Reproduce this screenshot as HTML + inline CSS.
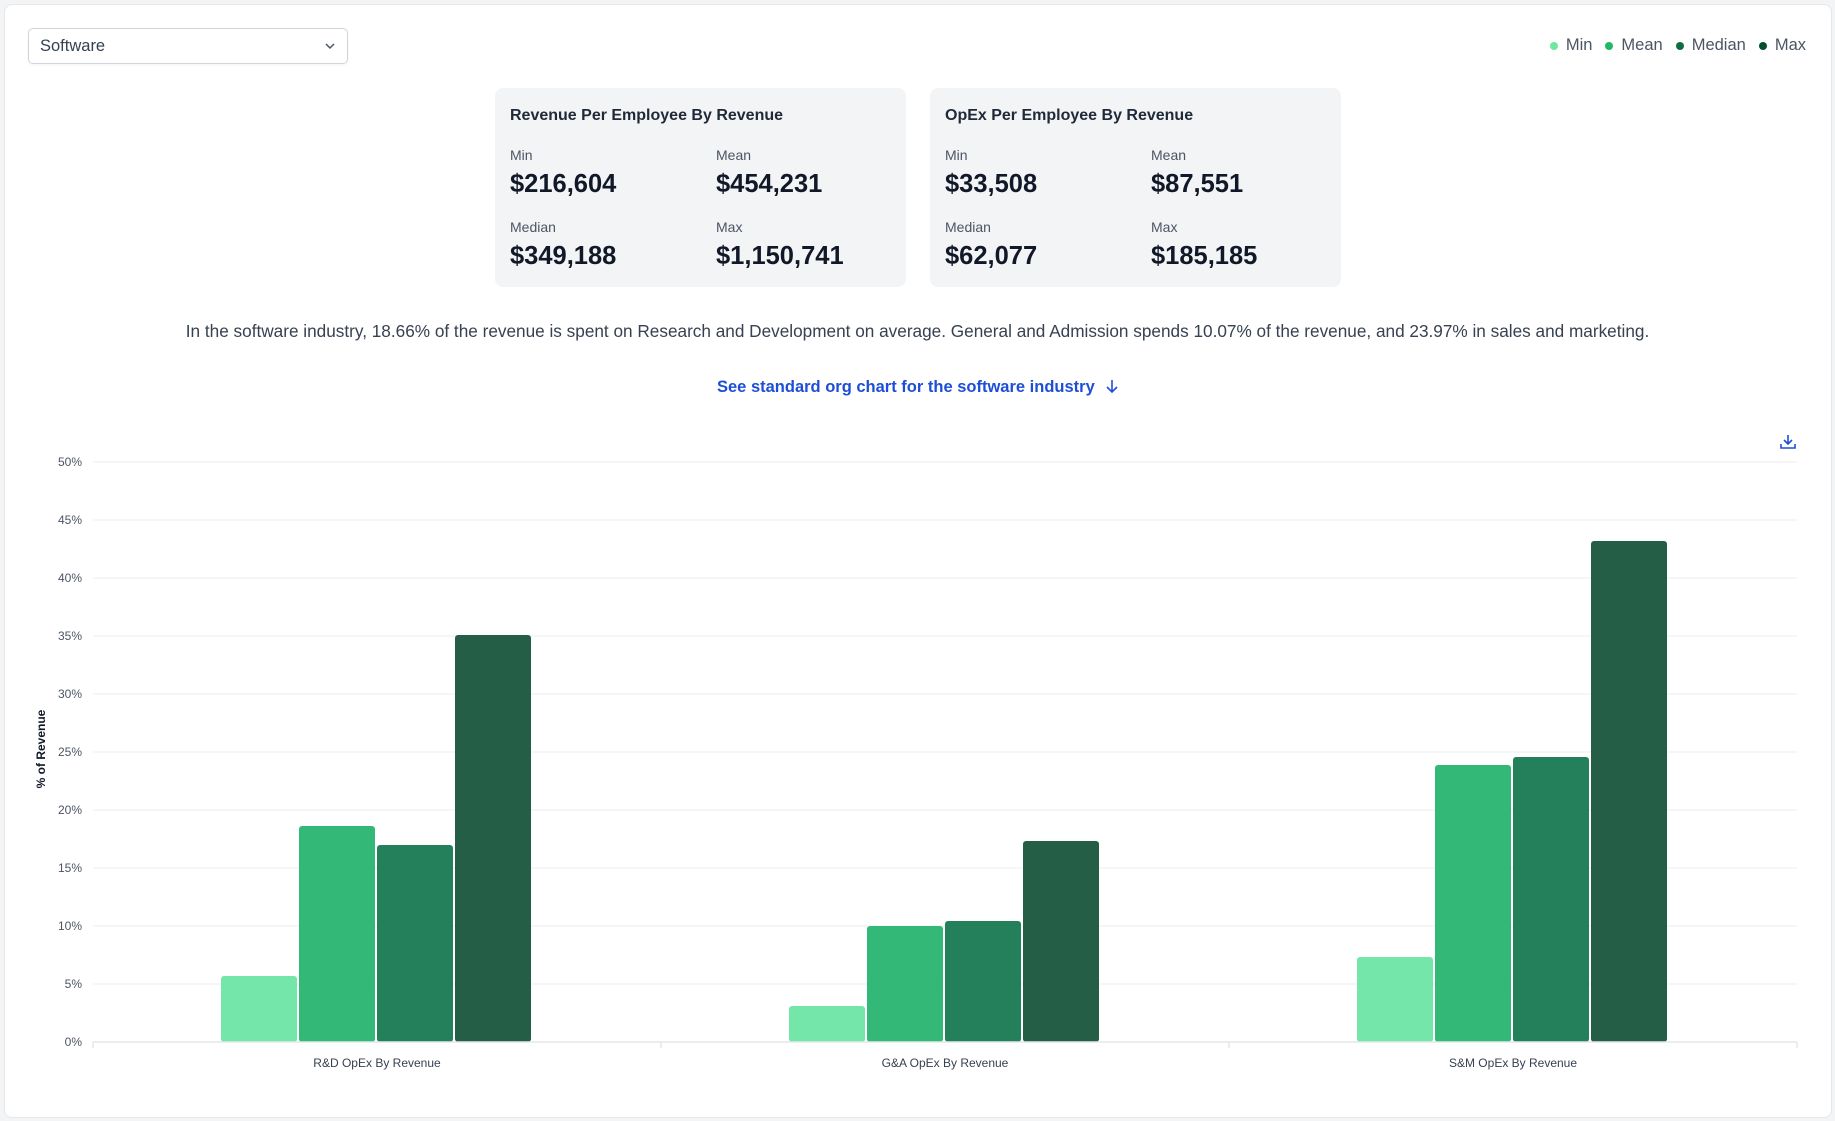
<!DOCTYPE html>
<html><head><meta charset="utf-8"><style>
*{box-sizing:border-box;margin:0;padding:0}
body{width:1835px;height:1121px;background:#f3f4f6;font-family:"Liberation Sans",sans-serif;position:relative;overflow:hidden}
.outer{position:absolute;left:4px;top:4px;width:1828px;height:1114px;background:#fff;border:1px solid #e5e7eb;border-radius:8px}
.sel{position:absolute;left:28px;top:28px;width:320px;height:36px;border:1px solid #d1d5db;border-radius:5px;font-size:16.5px;color:#374151;padding:8px 11px;box-shadow:0 1px 2px rgba(0,0,0,.05)}
.sel svg{position:absolute;right:11px;top:13px}
.legend{position:absolute;right:29px;top:36px;font-size:16.5px;color:#4b5563;display:flex;align-items:center;gap:0}
.legend span{display:flex;align-items:center;margin-left:13px}
.legend i{display:inline-block;width:8px;height:8px;border-radius:50%;margin-right:8px}
.card{position:absolute;top:88px;width:411px;height:199px;background:#f3f4f6;border-radius:8px}
.card h3{position:absolute;left:15px;top:19px;font-size:16px;font-weight:bold;color:#1f2937}
.lab{position:absolute;font-size:14px;color:#4b5563}
.val{position:absolute;font-size:25.5px;font-weight:bold;color:#111827}
.para{position:absolute;left:0;width:1835px;top:321px;text-align:center;font-size:17.2px;color:#374151}
.link{position:absolute;left:717px;top:378px;font-size:16.5px;font-weight:bold;color:#1d4ed8}
</style></head><body>
<div class="outer"></div>
<div class="sel">Software<svg width="12" height="8" viewBox="0 0 12 8"><path d="M2 2l4 4 4-4" fill="none" stroke="#4b5563" stroke-width="1.5"/></svg></div>
<div class="legend">
<span><i style="background:#6ee7a0"></i>Min</span>
<span><i style="background:#22b866"></i>Mean</span>
<span><i style="background:#0f6e40"></i>Median</span>
<span><i style="background:#064e30"></i>Max</span>
</div>

<div class="card" style="left:495px">
<h3>Revenue Per Employee By Revenue</h3>
<div class="lab" style="left:15px;top:59px">Min</div><div class="val" style="left:15px;top:82px">$216,604</div>
<div class="lab" style="left:221px;top:59px">Mean</div><div class="val" style="left:221px;top:82px">$454,231</div>
<div class="lab" style="left:15px;top:131px">Median</div><div class="val" style="left:15px;top:154px">$349,188</div>
<div class="lab" style="left:221px;top:131px">Max</div><div class="val" style="left:221px;top:154px">$1,150,741</div>
</div>
<div class="card" style="left:930px">
<h3>OpEx Per Employee By Revenue</h3>
<div class="lab" style="left:15px;top:59px">Min</div><div class="val" style="left:15px;top:82px">$33,508</div>
<div class="lab" style="left:221px;top:59px">Mean</div><div class="val" style="left:221px;top:82px">$87,551</div>
<div class="lab" style="left:15px;top:131px">Median</div><div class="val" style="left:15px;top:154px">$62,077</div>
<div class="lab" style="left:221px;top:131px">Max</div><div class="val" style="left:221px;top:154px">$185,185</div>
</div>

<div class="para">In the software industry, 18.66% of the revenue is spent on Research and Development on average. General and Admission spends 10.07% of the revenue, and 23.97% in sales and marketing.</div>
<div class="link">See standard org chart for the software industry <svg width="14" height="16" viewBox="0 0 14 16" style="vertical-align:-2px;margin-left:6px"><path d="M7 2v12M2 9l5 5 5-5" fill="none" stroke="#1d4ed8" stroke-width="1.6"/></svg></div>

<svg style="position:absolute;left:0;top:0" width="1835" height="1121" font-family="Liberation Sans, sans-serif">
<g transform="translate(1780,434)" fill="none" stroke="#1d4ed8" stroke-width="1.6"><path d="M8 1v9M4 6l4 4 4-4M1 10v4h14v-4"/></g>
<g stroke="#f0f0f0" stroke-width="1.2">
<line x1="93" x2="1797" y1="462" y2="462"/><line x1="93" x2="1797" y1="520" y2="520"/><line x1="93" x2="1797" y1="578" y2="578"/><line x1="93" x2="1797" y1="636" y2="636"/><line x1="93" x2="1797" y1="694" y2="694"/><line x1="93" x2="1797" y1="752" y2="752"/><line x1="93" x2="1797" y1="810" y2="810"/><line x1="93" x2="1797" y1="868" y2="868"/><line x1="93" x2="1797" y1="926" y2="926"/><line x1="93" x2="1797" y1="984" y2="984"/>
</g>
<g font-size="12" fill="#4b5563" text-anchor="end">
<text x="82" y="466">50%</text><text x="82" y="524">45%</text><text x="82" y="582">40%</text><text x="82" y="640">35%</text><text x="82" y="698">30%</text><text x="82" y="756">25%</text><text x="82" y="814">20%</text><text x="82" y="872">15%</text><text x="82" y="930">10%</text><text x="82" y="988">5%</text><text x="82" y="1046">0%</text>
</g>
<text transform="translate(45,749) rotate(-90)" text-anchor="middle" font-size="12" font-weight="bold" fill="#111827">% of Revenue</text>
<g>
<rect x="221" y="976" width="76" height="66" rx="3" fill="#75e6aa"/>
<rect x="299" y="826" width="76" height="216" rx="3" fill="#33b878"/>
<rect x="377" y="845" width="76" height="197" rx="3" fill="#24805a"/>
<rect x="455" y="635" width="76" height="407" rx="3" fill="#255e46"/>
<rect x="789" y="1006" width="76" height="36" rx="3" fill="#75e6aa"/>
<rect x="867" y="926" width="76" height="116" rx="3" fill="#33b878"/>
<rect x="945" y="921" width="76" height="121" rx="3" fill="#24805a"/>
<rect x="1023" y="841" width="76" height="201" rx="3" fill="#255e46"/>
<rect x="1357" y="957" width="76" height="85" rx="3" fill="#75e6aa"/>
<rect x="1435" y="765" width="76" height="277" rx="3" fill="#33b878"/>
<rect x="1513" y="757" width="76" height="285" rx="3" fill="#24805a"/>
<rect x="1591" y="541" width="76" height="501" rx="3" fill="#255e46"/>
</g>
<g stroke="#e5e7eb" stroke-width="1.5"><line x1="93" x2="1797" y1="1042" y2="1042"/>
<line x1="93" x2="93" y1="1042" y2="1048"/><line x1="661" x2="661" y1="1042" y2="1048"/><line x1="1229" x2="1229" y1="1042" y2="1048"/><line x1="1797" x2="1797" y1="1042" y2="1048"/></g>
<g font-size="12" fill="#374151" text-anchor="middle">
<text x="377" y="1067">R&amp;D OpEx By Revenue</text><text x="945" y="1067">G&amp;A OpEx By Revenue</text><text x="1513" y="1067">S&amp;M OpEx By Revenue</text>
</g>
</svg>
</body></html>
